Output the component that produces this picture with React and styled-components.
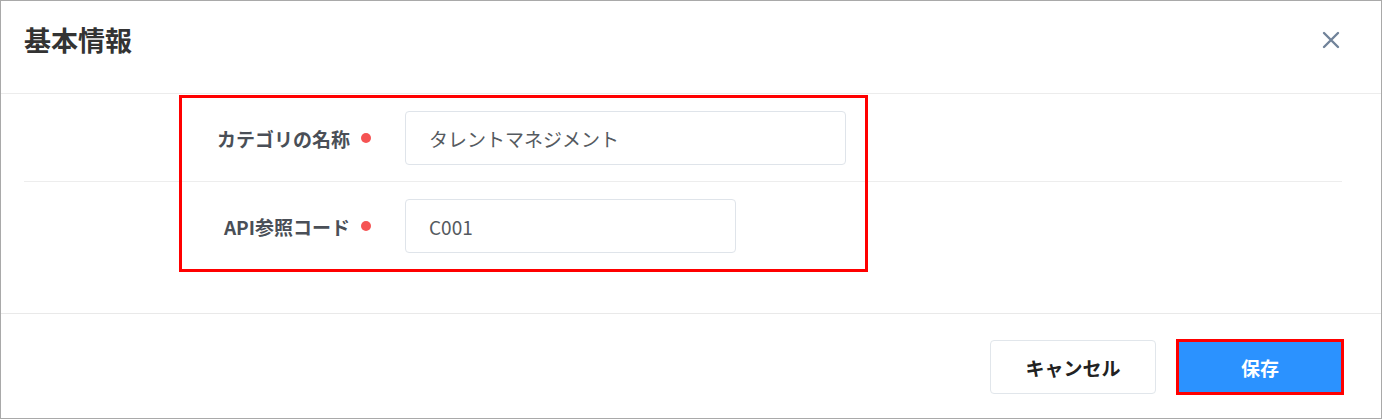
import React from "react";
import styled, { createGlobalStyle } from "styled-components";

const Global = createGlobalStyle`
  html, body { margin: 0; padding: 0; background: #fff; }
  * { box-sizing: border-box; }
  body { font-family: "Noto Sans CJK JP", "Noto Sans", sans-serif; }
`;

const Dialog = styled.div`
  width: 1382px;
  height: 419px;
  border: 1px solid #a9a9a9;
  display: flex;
  flex-direction: column;
  background: #fff;
`;

const Header = styled.header`
  height: 93px;
  flex: none;
  display: flex;
  align-items: flex-start;
  justify-content: space-between;
  padding: 19px 38px 0 23px;
  border-bottom: 1px solid #ececec;
`;

const Title = styled.h2`
  margin: 0;
  font-size: 27px;
  line-height: 40px;
  font-weight: 700;
  color: #333;
`;

const CloseButton = styled.button`
  width: 24px;
  height: 24px;
  margin-top: 8px;
  padding: 0;
  border: none;
  background: none;
  display: flex;
  align-items: center;
  justify-content: center;
  cursor: pointer;
`;

const Body = styled.div`
  position: relative;
  flex: 1;
  padding: 0 39px 0 23px;
`;

const Row = styled.div`
  display: grid;
  grid-template-columns: 357px 1fr;
  column-gap: 24px;
  align-items: center;
  padding: 17px 0 ${(p) => (p.$last ? "17px" : "16px")};
  border-bottom: ${(p) => (p.$last ? "none" : "1px solid #ededed")};
`;

const Label = styled.label`
  display: flex;
  align-items: center;
  justify-content: flex-end;
  gap: 11px;
  padding-right: 10px;
  font-size: 19px;
  font-weight: 700;
  color: #4a4f57;
`;

const Required = styled.span`
  width: 10px;
  height: 10px;
  border-radius: 50%;
  background: #f55353;
  flex: none;
`;

const Input = styled.input`
  width: ${(p) => p.$w}px;
  height: 54px;
  border: 1px solid #dfe4ea;
  border-radius: 4px;
  padding: 0 23px;
  font-family: "Noto Sans CJK JP", "Noto Sans", sans-serif;
  font-size: 19px;
  color: #555a60;
  background: #fff;
  outline: none;
`;

const Highlight = styled.div`
  position: absolute;
  top: 1px;
  left: 178px;
  width: 689px;
  height: 177px;
  border: 3px solid #ff0000;
  pointer-events: none;
`;

const Footer = styled.footer`
  flex: none;
  height: 105px;
  border-top: 1px solid #e9e9e9;
  display: flex;
  justify-content: flex-end;
  align-items: flex-start;
  gap: 21px;
  padding: 26px 38px 0 0;
`;

const Button = styled.button`
  width: 166px;
  height: 54px;
  font-family: "Noto Sans CJK JP", "Noto Sans", sans-serif;
  font-size: 19px;
  font-weight: 700;
  border-radius: ${(p) => (p.$marked ? "0" : "4px")};
  cursor: pointer;
  border: 1px solid ${(p) => (p.$primary ? "#2b92ff" : "#e1e6eb")};
  background: ${(p) => (p.$primary ? "#2b92ff" : "#fff")};
  color: ${(p) => (p.$primary ? "#fff" : "#222")};
  outline: ${(p) => (p.$marked ? "3px solid #ff0000" : "none")};
  outline-offset: -2px;
`;

export default function App() {
  return (
    <>
      <Global />
      <Dialog>
        <Header>
          <Title>基本情報</Title>
          <CloseButton aria-label="close">
            <svg width="18" height="18" viewBox="0 0 18 18">
              <path d="M2 2 L16 16 M16 2 L2 16" stroke="#71839a" strokeWidth="2.4" strokeLinecap="round" />
            </svg>
          </CloseButton>
        </Header>
        <Body>
          <Row>
            <Label>
              カテゴリの名称
              <Required />
            </Label>
            <Input $w={441} defaultValue="タレントマネジメント" />
          </Row>
          <Row $last>
            <Label>
              API参照コード
              <Required />
            </Label>
            <Input $w={331} defaultValue="C001" />
          </Row>
          <Highlight />
        </Body>
        <Footer>
          <Button>キャンセル</Button>
          <Button $primary $marked>保存</Button>
        </Footer>
      </Dialog>
    </>
  );
}
